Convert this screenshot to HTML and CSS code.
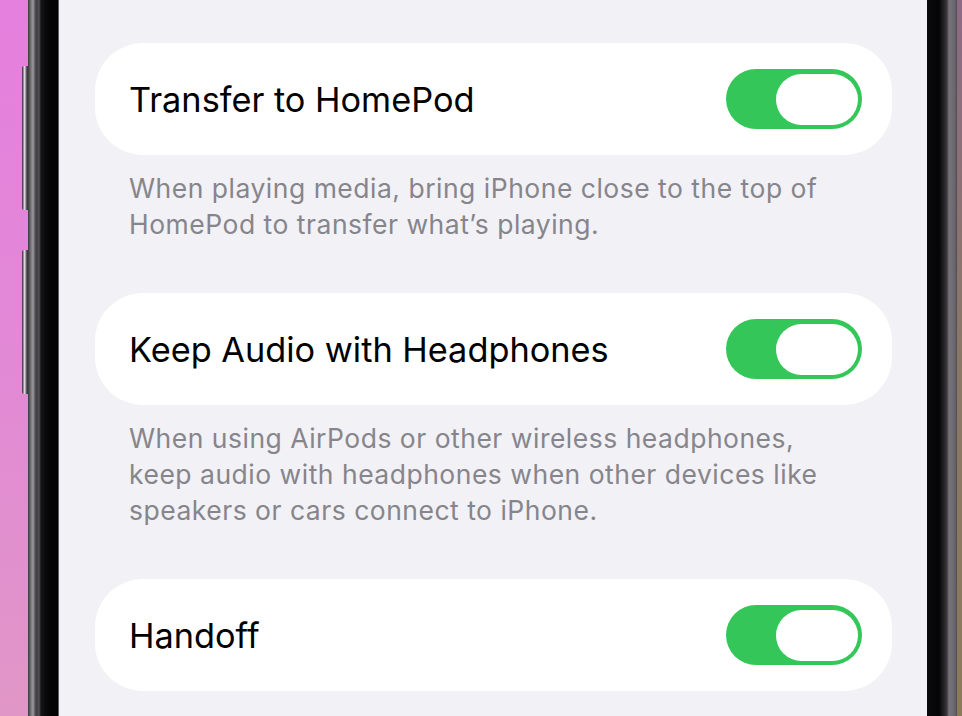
FILE: index.html
```html
<!DOCTYPE html>
<html lang="en">
<head>
    <meta charset="UTF-8">
    <meta name="viewport" content="width=device-width, initial-scale=1.0">
    <title>AirPlay &amp; Continuity</title>
    <link rel="stylesheet" href="styles.css">
</head>
<body>
    <div class="device">
        <div class="wallpaper left">
            <span class="side-btn vol-up"></span>
            <span class="side-btn vol-down"></span>
        </div>
        <div class="bezel left"></div>
        <main class="screen">
            <section class="group">
                <div class="cell">
                    <span class="label">Transfer to HomePod</span>
                    <span class="switch on"><span class="knob"></span></span>
                </div>
                <p class="footer">When playing media, bring iPhone close to the top of HomePod to transfer what’s playing.</p>
            </section>
            <section class="group">
                <div class="cell">
                    <span class="label">Keep Audio with Headphones</span>
                    <span class="switch on"><span class="knob"></span></span>
                </div>
                <p class="footer">When using AirPods or other wireless headphones, keep audio with headphones when other devices like speakers or cars connect to iPhone.</p>
            </section>
            <section class="group">
                <div class="cell">
                    <span class="label">Handoff</span>
                    <span class="switch on"><span class="knob"></span></span>
                </div>
            </section>
        </main>
        <div class="bezel right"></div>
        <div class="wallpaper right"></div>
    </div>
</body>
</html>
```

FILE: styles.css
```css
html, body {
    margin: 0;
    height: 100%;
}
body {
    font-family: 'Inter', 'Noto Sans', sans-serif;
    background: #e283d8;
    overflow: hidden;
}
.device {
    display: flex;
    height: 716px;
}
.wallpaper {
    position: relative;
    flex: none;
}
.wallpaper.left {
    width: 28px;
    background: linear-gradient(180deg, #e57fde 0%, #e289d6 50%, #e096c6 100%);
}
.wallpaper.right {
    width: 5px;
    background: linear-gradient(180deg, #8d6a86 0%, #8a7866 50%, #8c7a5c 100%);
}
.side-btn {
    position: absolute;
    left: 22px;
    width: 6px;
    border-radius: 2px 0 0 2px;
    background: linear-gradient(90deg, #3a1f3a 0%, #e9e4ea 45%, #6d666f 70%, #2a2a2c 100%);
}
.vol-up {
    top: 66px;
    height: 144px;
}
.vol-down {
    top: 250px;
    height: 144px;
}
.bezel {
    flex: none;
}
.bezel.left {
    width: 31px;
    background: linear-gradient(90deg, #3b383c 0px, #8d8a8e 4px, #9a979b 5px, #3e3b3f 8px, #525054 11px, #151416 13px, #050506 20px, #030304 30px, #bbb 31px);
}
.bezel.right {
    width: 30px;
    background: linear-gradient(90deg, #0a0a0c 0px, #050507 12px, #2a292d 18px, #3c3b40 20px, #77757b 22px, #68666c 28px, #4a4a4e 30px);
}
.screen {
    flex: 1;
    background: #f2f1f6;
    padding: 43px 35px 0 36px;
    display: flex;
    flex-direction: column;
}
.group {
    margin-bottom: 51px;
}
.cell {
    height: 112px;
    background: #fff;
    border-radius: 48px;
    display: flex;
    align-items: center;
    justify-content: space-between;
    padding: 0 30px 0 34px;
}
.label {
    font-size: 34.3px;
    color: #000;
}
.switch {
    position: relative;
    width: 136px;
    height: 60px;
    border-radius: 30px;
    background: #e5e5ea;
}
.switch.on {
    background: #35c659;
}
.knob {
    position: absolute;
    top: 5px;
    right: 4px;
    width: 82px;
    height: 51px;
    border-radius: 26px;
    background: #fff;
}
.footer {
    margin: 15px 0 0;
    padding: 0 34px;
    font-size: 26.5px;
    letter-spacing: 0.5px;
    line-height: 36px;
    color: #86858b;
}
```
